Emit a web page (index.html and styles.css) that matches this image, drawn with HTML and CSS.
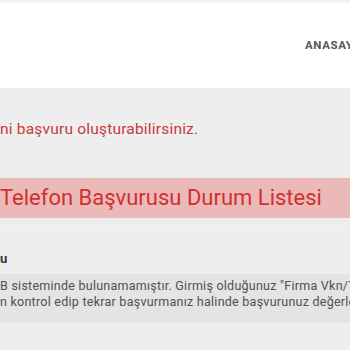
FILE: index.html
```html
<!DOCTYPE html>
<html lang="tr">
<head>
<meta charset="utf-8">
<title>Telefon Başvurusu Durum Listesi</title>
<link rel="stylesheet" href="styles.css">
</head>
<body>
<div class="topline"></div>
<header class="header">
  <nav class="nav"><a class="nav-link">ANASAYFA</a></nav>
</header>
<main class="main">
  <p class="notice">ni başvuru oluşturabilirsiniz.</p>
  <h1 class="title-bar">Telefon Başvurusu Durum Listesi</h1>
  <section class="card">
    <h2 class="label">u</h2>
    <div class="msg-box">
      <p class="msg-line">B sisteminde bulunamamıştır. Girmiş olduğunuz "Firma Vkn/Tckn"</p>
      <p class="msg-line">n kontrol edip tekrar başvurmanız halinde başvurunuz değerlendirilecektir.</p>
    </div>
  </section>
</main>
</body>
</html>
```

FILE: styles.css
```css
html, body {
  margin: 0;
  padding: 0;
}
body {
  width: 350px;
  height: 350px;
  overflow: hidden;
  background: #eeeeee;
  font-family: Roboto, "Liberation Sans", sans-serif;
}
.topline {
  height: 3px;
  background: linear-gradient(#ececec, #f8f8f8);
}
.header {
  height: 85px;
  background: #ffffff;
  display: flex;
  align-items: flex-start;
  padding-left: 305px;
  overflow: hidden;
  white-space: nowrap;
}
.nav {
  margin-top: 31px;
}
.nav-link {
  font-size: 11.5px;
  line-height: 14px;
  font-weight: 700;
  letter-spacing: 0.6px;
  color: #555555;
}
.main {
  padding-top: 31px;
}
.notice {
  margin: 0;
  font-size: 15.5px;
  line-height: 20px;
  color: #c9383c;
  letter-spacing: 0.2px;
  white-space: nowrap;
}
.title-bar {
  margin: 39px 0 0;
  height: 40px;
  background: #ecb9b9;
  font-size: 22px;
  font-weight: 400;
  line-height: 40px;
  color: #d1302f;
  white-space: nowrap;
  overflow: hidden;
}
.card {
  margin-top: 6px;
  border-top: 1px solid #f6f1f1;
  padding-top: 26px;
}
.label {
  margin: 0;
  font-size: 13px;
  font-weight: 700;
  line-height: 16px;
  color: #333333;
}
.msg-box {
  margin-top: 7px;
  background: #e4e4e4;
  padding: 4px 0 13px;
  overflow: hidden;
}
.msg-line {
  margin: 0;
  font-size: 12.5px;
  line-height: 16px;
  letter-spacing: 0.25px;
  color: #505050;
  white-space: nowrap;
}
```
